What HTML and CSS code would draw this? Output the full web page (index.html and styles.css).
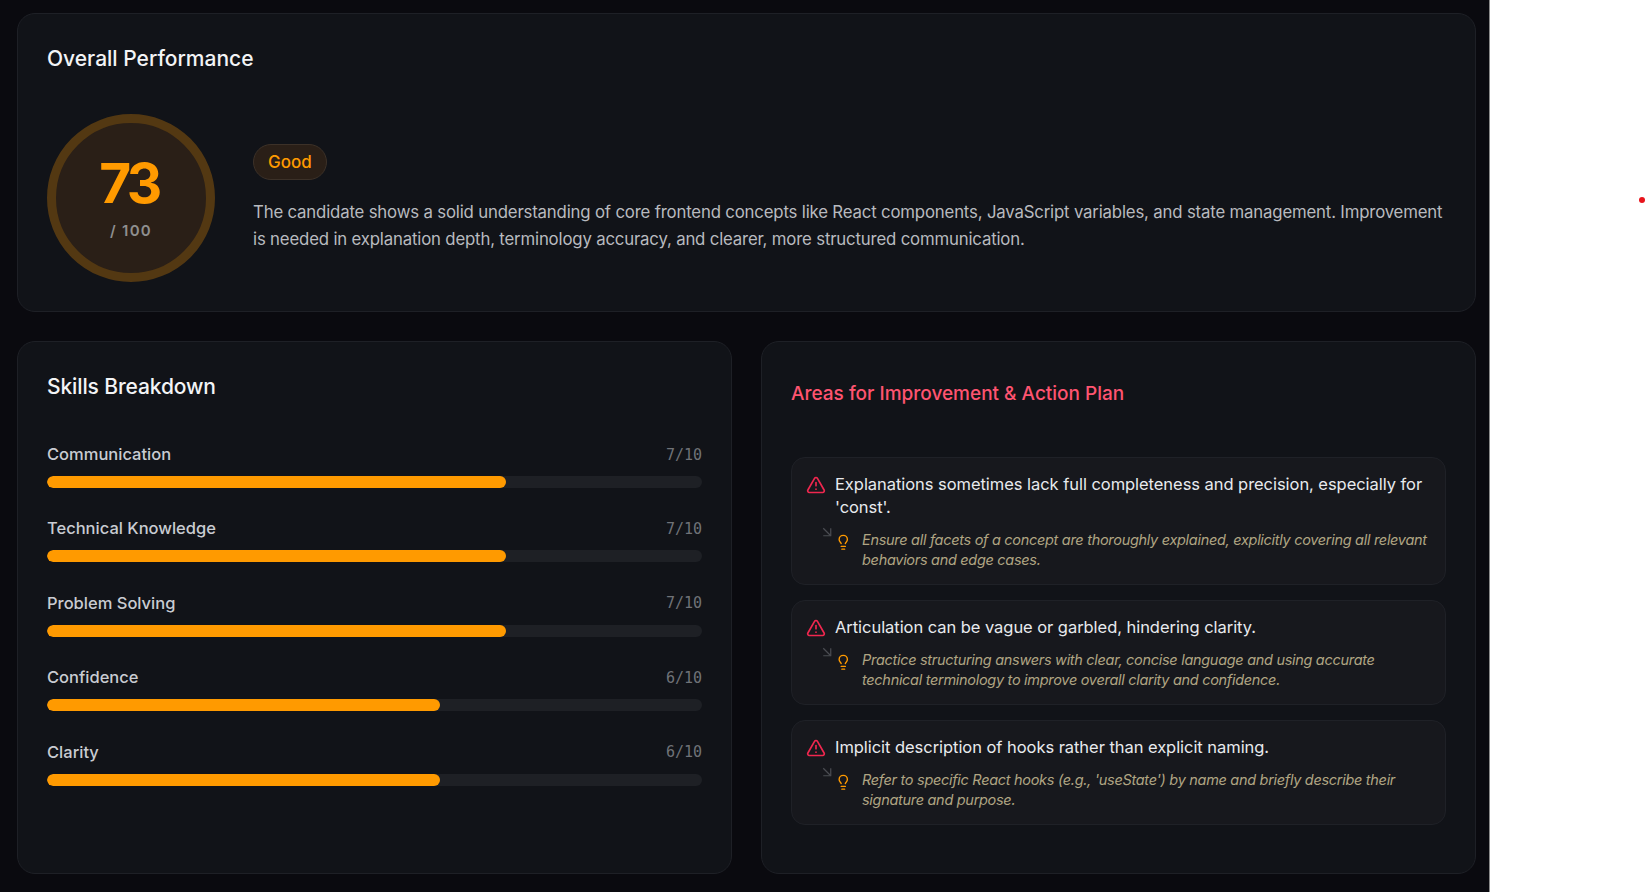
FILE: index.html
```html
<!DOCTYPE html>
<html lang="en">
<head>
<meta charset="utf-8">
<title>Interview Report</title>
<link rel="stylesheet" href="styles.css">
</head>
<body>
<main class="report">
  <section class="card overall">
    <h2 class="card-title">Overall Performance</h2>
    <div class="overall-body">
      <div class="score">
        <span class="score-value">73</span>
        <span class="score-max">/ 100</span>
      </div>
      <div class="summary">
        <span class="badge">Good</span>
        <p class="summary-text">The candidate shows a solid understanding of core frontend concepts like React components, JavaScript variables, and state management. Improvement is needed in explanation depth, terminology accuracy, and clearer, more structured communication.</p>
      </div>
    </div>
  </section>
  <div class="columns">
    <section class="card skills">
      <h2 class="card-title">Skills Breakdown</h2>
      <div class="skill-list">
        <div class="skill"><div class="skill-head"><span>Communication</span><span class="skill-num">7/10</span></div><div class="track"><div class="fill" style="width:70%"></div></div></div>
        <div class="skill"><div class="skill-head"><span>Technical Knowledge</span><span class="skill-num">7/10</span></div><div class="track"><div class="fill" style="width:70%"></div></div></div>
        <div class="skill"><div class="skill-head"><span>Problem Solving</span><span class="skill-num">7/10</span></div><div class="track"><div class="fill" style="width:70%"></div></div></div>
        <div class="skill"><div class="skill-head"><span>Confidence</span><span class="skill-num">6/10</span></div><div class="track"><div class="fill" style="width:60%"></div></div></div>
        <div class="skill"><div class="skill-head"><span>Clarity</span><span class="skill-num">6/10</span></div><div class="track"><div class="fill" style="width:60%"></div></div></div>
      </div>
    </section>
    <section class="card improve">
      <h2 class="improve-title">Areas for Improvement &amp; Action Plan</h2>
      <div class="improve-list">
        <article class="item">
          <div class="item-head">
            <svg class="icon-alert" viewBox="0 0 24 24"><path d="m21.73 18-8-14a2 2 0 0 0-3.48 0l-8 14A2 2 0 0 0 4 21h16a2 2 0 0 0 1.73-3"/><path d="M12 9v4"/><path d="M12 17h.01"/></svg>
            <p class="item-text">Explanations sometimes lack full completeness and precision, especially for 'const'.</p>
          </div>
          <div class="item-action">
            <svg class="icon-arrow" viewBox="0 0 24 24"><path d="m7 7 10 10"/><path d="M17 7v10H7"/></svg>
            <svg class="icon-bulb" viewBox="0 0 24 24"><path d="M15 14c.2-1 .7-1.7 1.5-2.5 1-.9 1.5-2.2 1.5-3.5A6 6 0 0 0 6 8c0 1 .2 2.2 1.5 3.5.7.7 1.3 1.5 1.5 2.5"/><path d="M9 18h6"/><path d="M10 22h4"/></svg>
            <p class="action-text">Ensure all facets of a concept are thoroughly explained, explicitly covering all relevant behaviors and edge cases.</p>
          </div>
        </article>
        <article class="item">
          <div class="item-head">
            <svg class="icon-alert" viewBox="0 0 24 24"><path d="m21.73 18-8-14a2 2 0 0 0-3.48 0l-8 14A2 2 0 0 0 4 21h16a2 2 0 0 0 1.73-3"/><path d="M12 9v4"/><path d="M12 17h.01"/></svg>
            <p class="item-text">Articulation can be vague or garbled, hindering clarity.</p>
          </div>
          <div class="item-action">
            <svg class="icon-arrow" viewBox="0 0 24 24"><path d="m7 7 10 10"/><path d="M17 7v10H7"/></svg>
            <svg class="icon-bulb" viewBox="0 0 24 24"><path d="M15 14c.2-1 .7-1.7 1.5-2.5 1-.9 1.5-2.2 1.5-3.5A6 6 0 0 0 6 8c0 1 .2 2.2 1.5 3.5.7.7 1.3 1.5 1.5 2.5"/><path d="M9 18h6"/><path d="M10 22h4"/></svg>
            <p class="action-text">Practice structuring answers with clear, concise language and using accurate technical terminology to improve overall clarity and confidence.</p>
          </div>
        </article>
        <article class="item">
          <div class="item-head">
            <svg class="icon-alert" viewBox="0 0 24 24"><path d="m21.73 18-8-14a2 2 0 0 0-3.48 0l-8 14A2 2 0 0 0 4 21h16a2 2 0 0 0 1.73-3"/><path d="M12 9v4"/><path d="M12 17h.01"/></svg>
            <p class="item-text">Implicit description of hooks rather than explicit naming.</p>
          </div>
          <div class="item-action">
            <svg class="icon-arrow" viewBox="0 0 24 24"><path d="m7 7 10 10"/><path d="M17 7v10H7"/></svg>
            <svg class="icon-bulb" viewBox="0 0 24 24"><path d="M15 14c.2-1 .7-1.7 1.5-2.5 1-.9 1.5-2.2 1.5-3.5A6 6 0 0 0 6 8c0 1 .2 2.2 1.5 3.5.7.7 1.3 1.5 1.5 2.5"/><path d="M9 18h6"/><path d="M10 22h4"/></svg>
            <p class="action-text">Refer to specific React hooks (e.g., 'useState') by name and briefly describe their signature and purpose.</p>
          </div>
        </article>
      </div>
    </section>
  </div>
</main>
<aside class="side"><span class="dot"></span></aside>
</body>
</html>
```

FILE: styles.css
```css
* { box-sizing: border-box; }
html, body { margin: 0; height: 100%; overflow: hidden; }
body { display: flex; background: #fff; font-family: "Inter", "Liberation Sans", sans-serif; }
h2, p { margin: 0; }

.report {
  width: 1490px;
  height: 892px;
  flex: none;
  padding: 13px 13px 0 17px;
  background: #0a0a0f;
  border-right: 1px solid #8a8a8a;
  display: flex;
  flex-direction: column;
  gap: 29px;
}
.card {
  background: #111318;
  border: 1px solid #1e2026;
  border-radius: 18px;
}
.card-title { font-size: 21px; line-height: 28px; font-weight: 500; color: #f3f4f6; }

.overall { height: 299px; padding: 31px 29px 0; }
.overall-body { display: flex; align-items: center; gap: 38px; margin-top: 41px; }
.score {
  width: 168px; height: 168px; flex: none;
  border: 9px solid #533812; border-radius: 50%;
  background: #2a1f17;
  display: flex; flex-direction: column; align-items: center; justify-content: center;
}
.score-value { font-size: 55px; line-height: 62px; font-weight: 700; color: #ff9a00; letter-spacing: -3.5px; margin-top: -4px; padding-right: 4px; }
.score-max { font-size: 15px; line-height: 20px; font-weight: 600; color: #8f8f8f; letter-spacing: 1.3px; margin-top: 7px; }
.summary { flex: 1; }
.badge {
  display: block; width: fit-content; height: 36px; line-height: 34px; padding: 0 14px;
  border: 1px solid #3c3128; border-radius: 18px; background: #2a1f17;
  color: #ff9a00; font-size: 17px; font-weight: 500;
}
.summary-text { margin-top: 19px; font-size: 16.8px; letter-spacing: -0.18px; line-height: 27px; color: #b8babf; }

.columns { display: grid; grid-template-columns: 715px 715px; gap: 29px; height: 533px; }
.skills { padding: 31px 29px 0; }
.skills .card-title { letter-spacing: -0.12px; }
.skill-list { display: flex; flex-direction: column; gap: 28.4px; margin-top: 41px; }
.skill-head { display: flex; justify-content: space-between; align-items: center; height: 24px; font-size: 16.5px; font-weight: 500; color: #c9ccd2; margin-bottom: 10px; }
.skill-num { font-family: "DejaVu Sans Mono", monospace; font-size: 15px; font-weight: 400; color: #6f7277; padding-top: 1px; }
.track { height: 12px; border-radius: 6px; background: #1e2025; overflow: hidden; }
.fill { height: 100%; border-radius: 6px; background: #ff9a00; }

.improve { padding: 39px 29px 0; }
.improve-title { font-size: 19px; line-height: 26px; font-weight: 500; color: #ff5470; }
.improve-list { display: flex; flex-direction: column; gap: 15px; margin-top: 50px; }
.item { background: #17181d; border: 1px solid #1f2127; border-radius: 14px; padding: 15px 14px 15px 14px; }
.item-head { display: flex; gap: 9px; }
.icon-alert { width: 20px; height: 20px; flex: none; margin-top: 2px; fill: none; stroke: #f0274f; stroke-width: 2; stroke-linecap: round; stroke-linejoin: round; }
.item-text { font-size: 16.5px; letter-spacing: -0.05px; line-height: 23px; color: #e8eaee; }
.item-action { display: flex; position: relative; margin-top: 11px; padding-left: 29px; }
.icon-arrow { position: absolute; left: 12px; top: -7px; width: 18px; height: 18px; fill: none; stroke: #4a4c52; stroke-width: 1.6; }
.icon-bulb { width: 16.5px; height: 16.5px; flex: none; margin: 3.5px 10.5px 0 0; fill: none; stroke: #ff9a00; stroke-width: 2; stroke-linecap: round; stroke-linejoin: round; }
.action-text { font-size: 14.5px; letter-spacing: -0.3px; line-height: 19.5px; font-style: italic; color: #b0a583; }

.side { flex: 1; position: relative; background: #fff; }
.dot { position: absolute; left: 149px; top: 197px; width: 6px; height: 6px; border-radius: 50%; background: #e8141c; }
```
